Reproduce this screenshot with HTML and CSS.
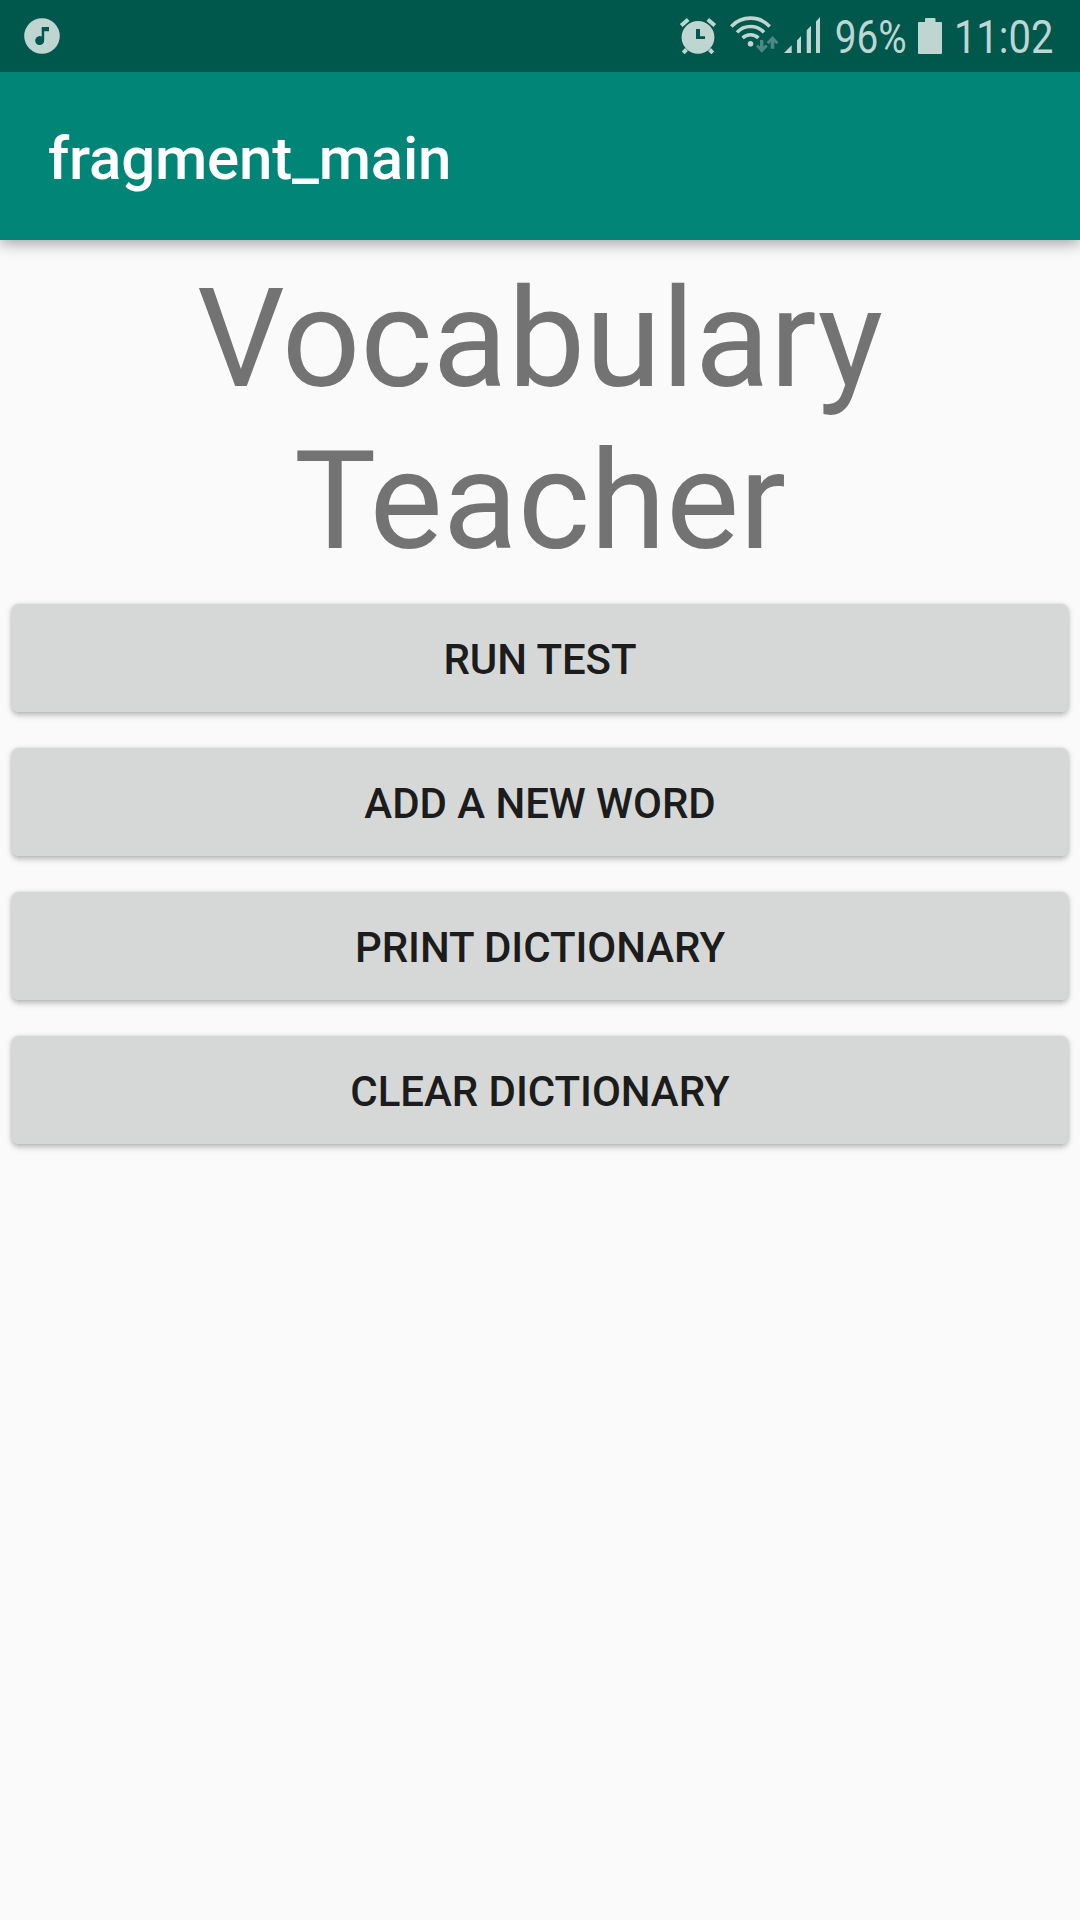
FILE: index.html
```html
<!DOCTYPE html>
<html lang="en">
<head>
<meta charset="utf-8">
<title>fragment_main</title>
<link rel="stylesheet" href="styles.css">
</head>
<body>
<header class="status-bar">
  <svg class="icon music" viewBox="0 0 36 36" aria-hidden="true">
    <circle cx="18" cy="18" r="17.8"/>
    <path class="cutout" d="M17.700 9h7.300v4.200h-4.800V22.500a4.500 4.500 0 1 1-2.500-4z"/>
  </svg>
  <div class="indicators">
    <svg class="icon alarm" viewBox="0 0 36 36" aria-hidden="true">
      <circle cx="18" cy="19.300" r="16.400"/>
      <path class="stroke" d="M1.200 7.600 8.200 1.400M27.800 1.400l7 6.200M6.500 31.500l-3.300 3.400M29.500 31.500l3.300 3.400"/>
      <path class="cutout" d="M16 11h4v7.300h5V21h-9z"/>
    </svg>
    <svg class="icon wifi" viewBox="0 0 48 37" aria-hidden="true">
      <path class="arc" d="M1.300 9.400a26.500 26.500 0 0 1 38.400 0M7 15.400a18.400 18.400 0 0 1 27 0M12.600 21a11.400 11.400 0 0 1 15.800 0"/>
      <circle cx="20.500" cy="26.700" r="2.800"/>
      <path class="traffic" d="M30 23h3.400v6.800l2.500-2.400 1.900 2-6.100 6.400-5.500-6.400 1.900-2 1.900 2.400zM40.700 31.800h3.600V25l2.200 2.300 1.900-2.100-5.800-6.300-5.900 6.300 1.900 2.100 2.100-2.300z"/>
    </svg>
    <svg class="icon signal" viewBox="0 0 36 36" aria-hidden="true">
      <path d="M0 36 7.700 28.300V36zM13 36V23.500l4-4.500V36zM22.700 36V13.300l4.300-4.500V36zM32 36V4.500L36 0v36z"/>
    </svg>
    <svg class="icon level" viewBox="0 0 73 72"><text x="0.700" y="53" textLength="72" lengthAdjust="spacingAndGlyphs">96%</text></svg>
    <svg class="icon battery" viewBox="0 0 24 36" aria-hidden="true">
      <path d="M7 1q0-1 1-1h8.500q1 0 1 1v3H23q1 0 1 1v30q0 1-1 1H1q-1 0-1-1V5q0-1 1-1h6z"/>
    </svg>
    <svg class="icon clock" viewBox="0 0 100 72"><text x="0.900" y="53" textLength="99.500" lengthAdjust="spacingAndGlyphs">11:02</text></svg>
  </div>
</header>
<div class="app-bar"><h1 class="app-title">fragment_main</h1></div>
<main class="content">
  <h2 class="heading">Vocabulary Teacher</h2>
  <div class="actions">
    <button class="action" type="button">RUN TEST</button>
    <button class="action" type="button">ADD A NEW WORD</button>
    <button class="action" type="button">PRINT DICTIONARY</button>
    <button class="action" type="button">CLEAR DICTIONARY</button>
  </div>
</main>
</body>
</html>
```

FILE: styles.css
```css
* {
  box-sizing: border-box;
}

body {
  margin: 0;
  min-height: 1920px;
  background: #fafafa;
  font-family: Roboto, sans-serif;
}

/* Stacked above the app bar so its shadow only falls downwards. */
.status-bar {
  position: relative;
  z-index: 1;
  display: flex;
  justify-content: space-between;
  height: 72px;
  padding: 0 27px 0 24px;
  background: #00574b;
}

.indicators {
  display: flex;
}

.icon {
  display: block;
  flex: none;
  overflow: visible;
  fill: #bfd5d2;
}

.icon text {
  font-size: 46px;
}

.music {
  width: 36px;
  height: 36px;
  margin-top: 18px;
}

.cutout {
  fill: #00574b;
}

.stroke,
.arc {
  fill: none;
  stroke: #bfd5d2;
  stroke-width: 4;
}

.arc {
  stroke-width: 3.6;
}

.traffic {
  fill: #4d8981;
}

.alarm {
  width: 36px;
  height: 36px;
  margin: 18px 14px 0 0;
}

.wifi {
  width: 48px;
  height: 37px;
  margin: 17px 6px 0 0;
}

.signal {
  width: 36px;
  height: 36px;
  margin: 17px 14px 0 0;
}

.level {
  width: 73px;
  height: 72px;
}

.battery {
  width: 24px;
  height: 36px;
  margin: 18px 11px 0;
}

.clock {
  width: 100px;
  height: 72px;
}

.app-bar {
  display: flex;
  align-items: center;
  height: 168px;
  padding: 6px 48px 0;
  background: #008577;
  box-shadow: 0 4px 14px rgba(0, 0, 0, 0.34);
}

.app-title {
  margin: 0;
  color: #fff;
  font-size: 60px;
  font-weight: 500;
  letter-spacing: -0.18px;
  line-height: 70px;
}

.heading {
  margin: 0;
  padding: 18px 150px 0;
  color: #737373;
  font-size: 138px;
  font-weight: 400;
  line-height: 162px;
  text-align: center;
}

.actions {
  display: flex;
  flex-direction: column;
  gap: 36px;
  padding: 22px 12px 0;
}

.action {
  height: 108px;
  padding: 4px 0 0;
  border: 0;
  border-radius: 6px;
  background: #d6d8d7;
  box-shadow: 0 3px 6px rgba(0, 0, 0, 0.26), 0 0 4px rgba(0, 0, 0, 0.1);
  color: #1c1c1c;
  font: 500 42px/50px Roboto, sans-serif;
  letter-spacing: -0.06px;
}
```
